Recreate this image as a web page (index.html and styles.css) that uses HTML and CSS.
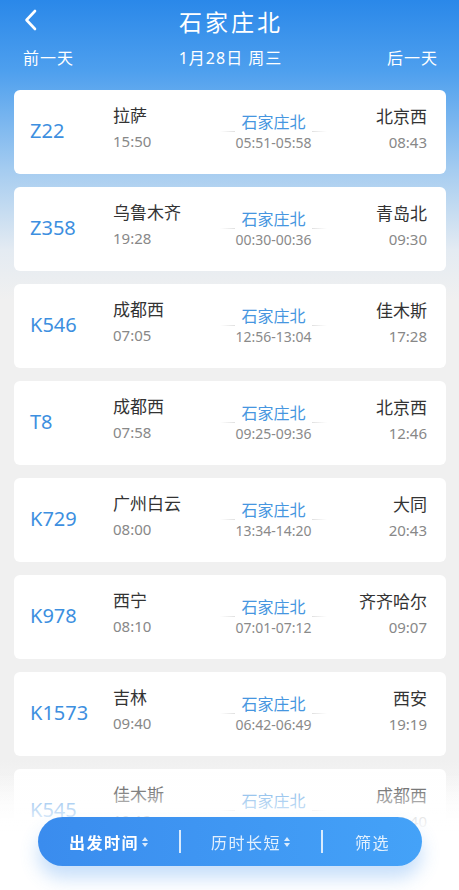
FILE: index.html
```html
<!DOCTYPE html>
<html lang="zh">
<head>
    <meta charset="UTF-8">
    <meta name="viewport" content="width=device-width, initial-scale=1.0">
    <title>石家庄北</title>
    <link rel="stylesheet" href="styles.css">
</head>
<body>
    <!-- 顶部 -->
    <div class="header">
        <div class="title-row">
            <svg class="back" width="16" height="24" viewBox="0 0 16 24">
                <path d="M12 3 L3.5 12 L12 21" fill="none" stroke="#fff" stroke-width="2.6" stroke-linecap="round" stroke-linejoin="round"/>
            </svg>
            <h1>石家庄北</h1>
        </div>
        <div class="day-row">
            <span>前一天</span>
            <span>1月28日 周三</span>
            <span>后一天</span>
        </div>
    </div>

    <!-- 车次列表 -->
    <div class="list">
        <div class="card">
            <div class="num">Z22</div>
            <div class="from"><div class="st">拉萨</div><div class="tm">15:50</div></div>
            <div class="via"><div class="st">石家庄北</div><div class="tm">05:51-05:58</div></div>
            <div class="to"><div class="st">北京西</div><div class="tm">08:43</div></div>
        </div>
        <div class="card">
            <div class="num">Z358</div>
            <div class="from"><div class="st">乌鲁木齐</div><div class="tm">19:28</div></div>
            <div class="via"><div class="st">石家庄北</div><div class="tm">00:30-00:36</div></div>
            <div class="to"><div class="st">青岛北</div><div class="tm">09:30</div></div>
        </div>
        <div class="card">
            <div class="num">K546</div>
            <div class="from"><div class="st">成都西</div><div class="tm">07:05</div></div>
            <div class="via"><div class="st">石家庄北</div><div class="tm">12:56-13:04</div></div>
            <div class="to"><div class="st">佳木斯</div><div class="tm">17:28</div></div>
        </div>
        <div class="card">
            <div class="num">T8</div>
            <div class="from"><div class="st">成都西</div><div class="tm">07:58</div></div>
            <div class="via"><div class="st">石家庄北</div><div class="tm">09:25-09:36</div></div>
            <div class="to"><div class="st">北京西</div><div class="tm">12:46</div></div>
        </div>
        <div class="card">
            <div class="num">K729</div>
            <div class="from"><div class="st">广州白云</div><div class="tm">08:00</div></div>
            <div class="via"><div class="st">石家庄北</div><div class="tm">13:34-14:20</div></div>
            <div class="to"><div class="st">大同</div><div class="tm">20:43</div></div>
        </div>
        <div class="card">
            <div class="num">K978</div>
            <div class="from"><div class="st">西宁</div><div class="tm">08:10</div></div>
            <div class="via"><div class="st">石家庄北</div><div class="tm">07:01-07:12</div></div>
            <div class="to"><div class="st">齐齐哈尔</div><div class="tm">09:07</div></div>
        </div>
        <div class="card">
            <div class="num">K1573</div>
            <div class="from"><div class="st">吉林</div><div class="tm">09:40</div></div>
            <div class="via"><div class="st">石家庄北</div><div class="tm">06:42-06:49</div></div>
            <div class="to"><div class="st">西安</div><div class="tm">19:19</div></div>
        </div>
        <div class="card">
            <div class="num">K545</div>
            <div class="from"><div class="st">佳木斯</div><div class="tm">10:12</div></div>
            <div class="via"><div class="st">石家庄北</div><div class="tm">04:55-05:03</div></div>
            <div class="to"><div class="st">成都西</div><div class="tm">16:40</div></div>
        </div>
    </div>

    <!-- 底部渐隐和排序栏 -->
    <div class="fade"></div>
    <div class="sort-bar">
        <div class="sort active">出发时间<span class="arrows"></span></div>
        <div class="sep"></div>
        <div class="sort">历时长短<span class="arrows"></span></div>
        <div class="sep"></div>
        <div class="sort last">筛选</div>
    </div>
</body>
</html>
```

FILE: styles.css
```css
/* 基本样式 */
body {
    margin: 0;
    height: 890px;
    overflow: hidden;
    font-family: "Noto Sans", "Noto Sans CJK SC", sans-serif;
    background: linear-gradient(#2a88e9 0, #4d9fee 70px, #a5ccf0 170px, #e4ebf2 250px, #f0f0f0 300px, #f0f0f0 760px, #ffffff 840px);
}

/* 顶部 */
.header {
    height: 90px;
    color: #fff;
}

.title-row {
    position: relative;
    height: 42px;
    display: flex;
    align-items: center;
    justify-content: center;
}

.back {
    position: absolute;
    left: 23px;
    top: 8px;
}

h1 {
    margin: 0;
    font-size: 23px;
    font-weight: 400;
    letter-spacing: 3px;
    padding-left: 3px;
}

.day-row {
    display: flex;
    justify-content: space-between;
    padding: 4px 21px 0 23px;
    font-size: 16px;
    line-height: 24px;
    letter-spacing: 1px;
}

/* 列表 */
.list {
    display: flex;
    flex-direction: column;
    gap: 13px;
    padding: 0 13px 0 14px;
}

.card {
    height: 84px;
    box-sizing: border-box;
    background: #fff;
    border-radius: 6px;
    display: grid;
    grid-template-columns: 83px 107px 107px 100px;
    align-items: start;
    padding: 14px 19px 0 16px;
}

.num {
    margin-top: 13px;
    font-size: 20px;
    line-height: 28px;
    color: #3d8fe0;
}

.st {
    font-size: 17px;
    line-height: 24px;
    color: #333;
}

.tm {
    font-size: 15px;
    line-height: 26px;
    color: #888;
}

.to {
    text-align: right;
    margin-top: 1px;
}

.via {
    position: relative;
    margin-top: 7px;
    text-align: center;
}

.via .st {
    font-size: 16px;
    line-height: 22px;
    color: #4696e0;
}

.via .tm {
    font-size: 14px;
    line-height: 20px;
    color: #8a8a8a;
}

/* 中间的细线 */
.via:before,
.via:after {
    content: "";
    position: absolute;
    top: 20px;
    width: 15px;
    height: 1px;
}

.via:before {
    left: 0;
    background: linear-gradient(to right, rgba(220, 220, 220, 0), #e0e0e0);
}

.via:after {
    right: 0;
    background: linear-gradient(to right, #e0e0e0, rgba(220, 220, 220, 0));
}

/* 底部 */
.fade {
    position: fixed;
    left: 0;
    right: 0;
    top: 772px;
    bottom: 0;
    background: linear-gradient(rgba(255, 255, 255, 0) 0, rgba(255, 255, 255, 0.55) 28px, #fff 60px);
}

.sort-bar {
    position: fixed;
    left: 38px;
    top: 817px;
    width: 384px;
    height: 49px;
    border-radius: 25px;
    background: linear-gradient(to right, #3a8cee, #44a2f8);
    box-shadow: 0 12px 18px rgba(70, 150, 240, 0.3);
    display: flex;
    align-items: center;
    color: rgba(255, 255, 255, 0.85);
    font-size: 16px;
}

.sort {
    width: 142px;
    display: flex;
    align-items: center;
    justify-content: center;
    letter-spacing: 1.5px;
}

.sort.last {
    width: auto;
    flex: 1;
    padding-left: 1px;
}

.sort.active {
    color: #fff;
    font-weight: bold;
}

.sep {
    width: 1.5px;
    height: 23px;
    margin: 0 -0.75px;
    background: rgba(255, 255, 255, 0.8);
}

/* 小三角 */
.arrows {
    position: relative;
    width: 8px;
    height: 12px;
    margin-left: 2px;
}

.arrows:before,
.arrows:after {
    content: "";
    position: absolute;
    left: 1px;
    border-left: 3px solid transparent;
    border-right: 3px solid transparent;
}

.arrows:before {
    top: 1px;
    border-bottom: 4px solid rgba(255, 255, 255, 0.8);
}

.arrows:after {
    bottom: 1px;
    border-top: 4px solid rgba(255, 255, 255, 0.8);
}
```
